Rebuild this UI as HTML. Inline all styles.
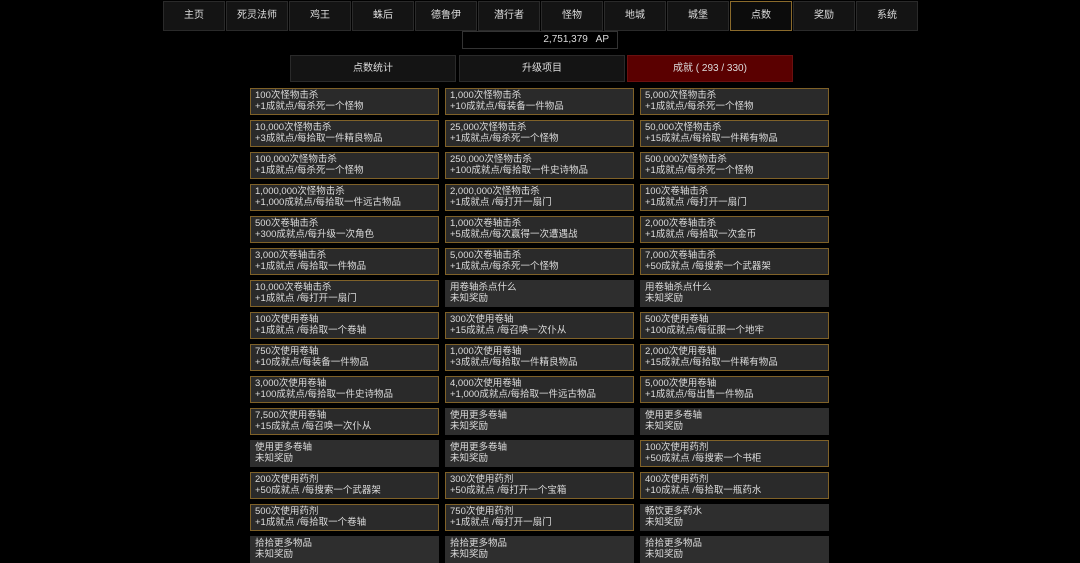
<!DOCTYPE html>
<html><head><meta charset="utf-8"><style>
body{margin:0;background:#000;width:1080px;height:540px;overflow:hidden;position:relative;font-family:"Liberation Sans","Noto Sans CJK SC",sans-serif;color:#ddd}
.nav{position:absolute;top:1px;height:28px;width:60px;background:#141414;border:1px solid #2a2a2a;font-size:10px;line-height:28px;text-align:center;color:#ddd}
.nav.act{border-color:#8a6a2b;background:#0c0c0c}
.ap{position:absolute;left:462px;top:31px;width:146px;height:16px;border:1px solid #333;font-size:10px;line-height:16px;text-align:right;padding-right:8px;color:#ddd}
.tab{position:absolute;top:55px;width:164px;height:25px;background:#141414;border:1px solid #2a2a2a;font-size:10px;line-height:26px;text-align:center}
.tab.act{background:#5a0000;border-color:#6a1010}
.c{position:absolute;width:187px;height:24px;border:1px solid #7f6128;background:#2a2a2a;font-size:9.5px;line-height:11px;padding:1px 0 0 0;box-sizing:content-box;overflow:hidden;white-space:nowrap}
.c span{display:block;padding-left:4px}
.c.u{border-color:#2e2e2e;background:#2e2e2e}
</style></head><body>
<div class="nav" style="left:163px">主页</div>
<div class="nav" style="left:226px">死灵法师</div>
<div class="nav" style="left:289px">鸡王</div>
<div class="nav" style="left:352px">蛛后</div>
<div class="nav" style="left:415px">德鲁伊</div>
<div class="nav" style="left:478px">潜行者</div>
<div class="nav" style="left:541px">怪物</div>
<div class="nav" style="left:604px">地城</div>
<div class="nav" style="left:667px">城堡</div>
<div class="nav act" style="left:730px">点数</div>
<div class="nav" style="left:793px">奖励</div>
<div class="nav" style="left:856px">系统</div>
<div class="ap">2,751,379&nbsp;&nbsp; AP</div>
<div class="tab" style="left:290px">点数统计</div>
<div class="tab" style="left:459px">升级项目</div>
<div class="tab act" style="left:627px">成就 ( 293 / 330)</div>
<div id="g"></div>
<script>
var d=[
["100次怪物击杀","+1成就点/每杀死一个怪物","1,000次怪物击杀","+10成就点/每装备一件物品","5,000次怪物击杀","+1成就点/每杀死一个怪物"],
["10,000次怪物击杀","+3成就点/每拾取一件精良物品","25,000次怪物击杀","+1成就点/每杀死一个怪物","50,000次怪物击杀","+15成就点/每拾取一件稀有物品"],
["100,000次怪物击杀","+1成就点/每杀死一个怪物","250,000次怪物击杀","+100成就点/每拾取一件史诗物品","500,000次怪物击杀","+1成就点/每杀死一个怪物"],
["1,000,000次怪物击杀","+1,000成就点/每拾取一件远古物品","2,000,000次怪物击杀","+1成就点 /每打开一扇门","100次卷轴击杀","+1成就点 /每打开一扇门"],
["500次卷轴击杀","+300成就点/每升级一次角色","1,000次卷轴击杀","+5成就点/每次赢得一次遭遇战","2,000次卷轴击杀","+1成就点 /每拾取一次金币"],
["3,000次卷轴击杀","+1成就点 /每拾取一件物品","5,000次卷轴击杀","+1成就点/每杀死一个怪物","7,000次卷轴击杀","+50成就点 /每搜索一个武器架"],
["10,000次卷轴击杀","+1成就点 /每打开一扇门","*用卷轴杀点什么","未知奖励","*用卷轴杀点什么","未知奖励"],
["100次使用卷轴","+1成就点 /每拾取一个卷轴","300次使用卷轴","+15成就点 /每召唤一次仆从","500次使用卷轴","+100成就点/每征服一个地牢"],
["750次使用卷轴","+10成就点/每装备一件物品","1,000次使用卷轴","+3成就点/每拾取一件精良物品","2,000次使用卷轴","+15成就点/每拾取一件稀有物品"],
["3,000次使用卷轴","+100成就点/每拾取一件史诗物品","4,000次使用卷轴","+1,000成就点/每拾取一件远古物品","5,000次使用卷轴","+1成就点/每出售一件物品"],
["7,500次使用卷轴","+15成就点 /每召唤一次仆从","*使用更多卷轴","未知奖励","*使用更多卷轴","未知奖励"],
["*使用更多卷轴","未知奖励","*使用更多卷轴","未知奖励","100次使用药剂","+50成就点 /每搜索一个书柜"],
["200次使用药剂","+50成就点 /每搜索一个武器架","300次使用药剂","+50成就点 /每打开一个宝箱","400次使用药剂","+10成就点 /每拾取一瓶药水"],
["500次使用药剂","+1成就点 /每拾取一个卷轴","750次使用药剂","+1成就点 /每打开一扇门","*畅饮更多药水","未知奖励"],
["*拾拾更多物品","未知奖励","*拾拾更多物品","未知奖励","*拾拾更多物品","未知奖励"]];
var xs=[250,445,640],h="";
d.forEach(function(r,i){for(var j=0;j<3;j++){var t=r[j*2],u=t[0]=="*";if(u)t=t.slice(1);
h+='<div class="c'+(u?' u':'')+'" style="left:'+xs[j]+'px;top:'+(88+i*32)+'px"><span>'+t+'</span><span>'+r[j*2+1]+'</span></div>';}});
document.getElementById("g").innerHTML=h;
</script>
</body></html>
